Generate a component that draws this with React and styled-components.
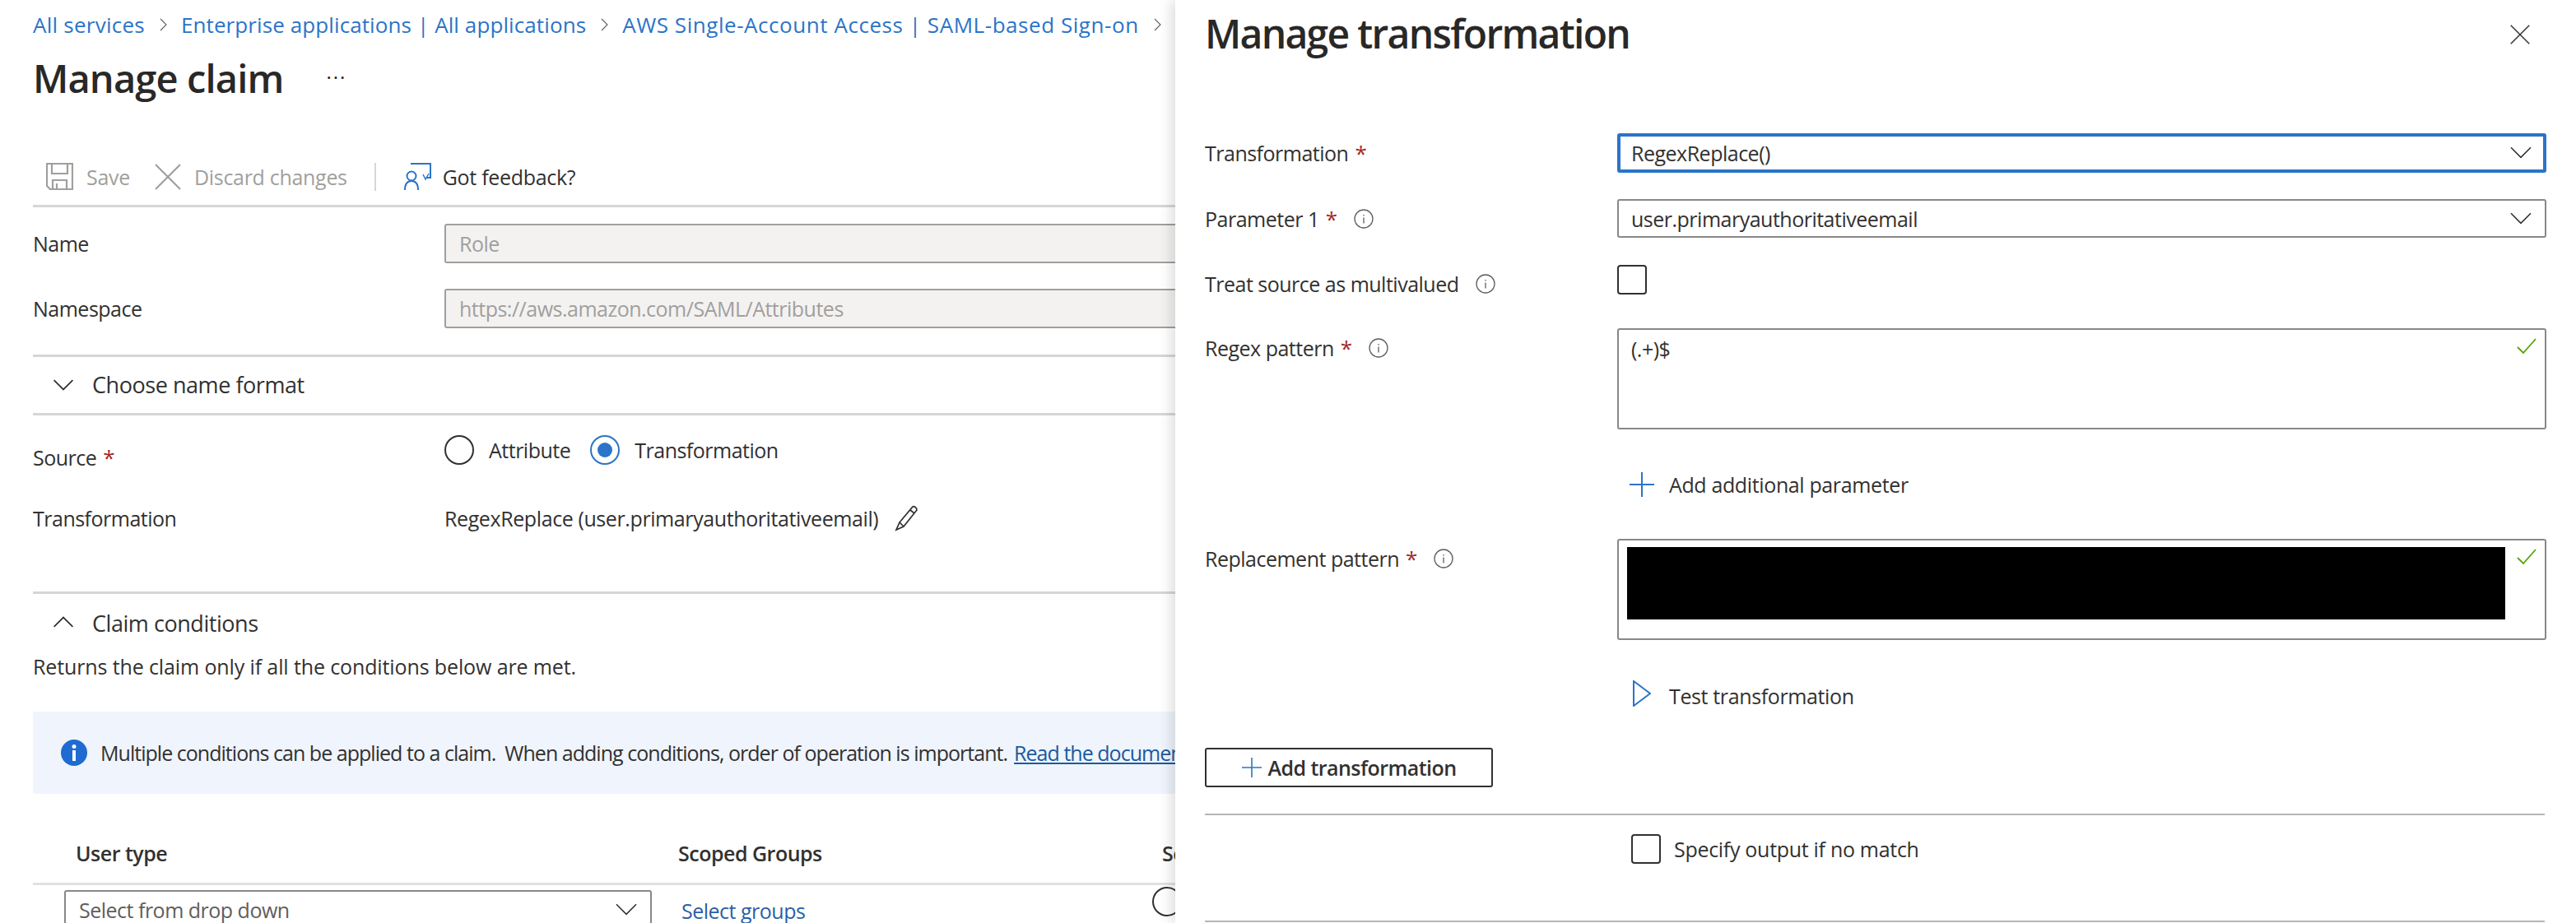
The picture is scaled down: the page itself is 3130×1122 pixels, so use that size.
import React from "react";
import styled, { createGlobalStyle } from "styled-components";

const Global = createGlobalStyle`
  html, body { margin: 0; padding: 0; background: #fff; }
  body { font-family: "Open Sans", "Liberation Sans", sans-serif; color: #323130; }
  * { box-sizing: border-box; }
  svg { flex: none; }
`;
const Page = styled.div`
  width: 3130px; height: 1122px; overflow: hidden; display: flex; font-size: 25px; letter-spacing: -0.5px;
`;
const Main = styled.main`
  width: 1428px; flex: none; height: 1122px; overflow: hidden; padding-left: 40px; white-space: nowrap;
`;
const Crumbs = styled.nav`
  height: 60px; display: flex; align-items: center; gap: 14px; color: #2b74c8; font-size: 26px;
`;
const Crumb = styled.a`
  letter-spacing: ${p => p.$ls}px;
`;
const Title = styled.h1`
  margin: 4px 0 0; height: 62px; display: flex; align-items: center; gap: 52px; font-size: 47px; font-weight: 600; letter-spacing: -0.85px; color: #292827;
`;
const Dots = styled.span`
  font-size: 24px; font-weight: 400; letter-spacing: 2px; position: relative; top: -2px;
`;
const Toolbar = styled.div`
  margin: 64px 0 4px; height: 62px; display: flex; align-items: center; padding-left: 16px; padding-bottom: 10px; border-bottom: 3px solid #d6d6d6; letter-spacing: -0.3px;
`;
const ToolItem = styled.span`
  display: flex; align-items: center; gap: ${p => p.$gap || 16}px; margin-left: ${p => p.$ml || 0}px; color: ${p => p.$off ? "#a19f9d" : "#323130"};
`;
const ToolSep = styled.span`
  width: 2px; height: 34px; background: #d6d6d6; margin: 0 33px;
`;
const Row = styled.div`
  display: flex; align-items: center; height: ${p => p.$h}px; margin-top: ${p => p.$mt || 0}px; letter-spacing: ${p => p.$ls ?? -0.5}px;
`;
const Label = styled.span`
  width: 500px; flex: none; letter-spacing: -0.5px;
`;
const Disabled = styled.div`
  flex: 1; height: 48px; margin-right: -40px; background: #f3f2f1; border: 2px solid #a19f9d; border-radius: 3px; color: #a19f9d; padding-left: 16px; display: flex; align-items: center;
`;
const Section = styled.div`
  display: flex; align-items: center; gap: 22px; padding-left: 24px; padding-bottom: 2px; height: ${p => p.$h || 74}px; margin-top: ${p => p.$mt || 0}px; margin-right: -40px;
  ${p => p.$top && "border-top: 3px solid #d6d6d6;"}
  ${p => p.$bottom && "border-bottom: 3px solid #d6d6d6;"}
  font-size: 27px; letter-spacing: -0.45px;
`;
const RadioDot = styled.span`
  width: 36px; height: 36px; border-radius: 50%; flex: none; border: 2px solid ${p => p.$on ? "#2b74c8" : "#323130"}; display: flex; align-items: center; justify-content: center;
  &::after { content: ""; width: 18px; height: 18px; border-radius: 50%; background: ${p => p.$on ? "#2b74c8" : "transparent"}; }
`;
const RadioGroup = styled.div`
  display: flex; align-items: center; margin-top: -18px;
`;
const RadioText = styled.span`
  margin-left: 18px; margin-right: 24px;
`;
const Req = styled.span`
  color: #a4262c; margin-left: 8px; font-size: 26px;
`;
const Info = styled.div`
  height: 100px; margin-top: 36px; margin-right: -40px; background: #eff4fd; display: flex; align-items: center; padding-left: 34px; gap: 16px; overflow: hidden; border-radius: 3px; letter-spacing: -0.97px;
`;
const InfoLink = styled.a`
  color: #1a5a9e; text-decoration: underline; margin-left: -8px;
`;
const TableHead = styled.div`
  display: flex; align-items: center; height: 111px; padding-top: 36px; margin-right: -40px; border-bottom: 3px solid #e1e1e1; font-weight: 600; padding-left: 52px;
`;
const Col = styled.span`
  width: ${p => p.$w}px; flex: none;
`;
const TableRow = styled.div`
  display: flex; margin-top: 6px; padding-left: 38px; margin-right: -40px; align-items: flex-start;
`;
const Drop = styled.div`
  width: 714px; height: 48px; border: 2px solid #8a8886; border-radius: 3px; padding: 0 16px; display: flex; align-items: center; justify-content: space-between; color: #605e5c;
`;
const GroupLink = styled.a`
  color: #2b5fa8; margin-left: 36px; margin-top: 8px; width: 572px;
`;
const CutRadio = styled.span`
  width: 36px; height: 36px; border-radius: 50%; border: 2px solid #323130; display: block; flex: none; margin-top: -4px;
`;
const Panel = styled.aside`
  flex: 1; height: 1122px; position: relative; background: #fff; padding-left: 36px; box-shadow: -6px 0 14px rgba(0,0,0,.12); white-space: nowrap;
`;
const PanelTitle = styled.h2`
  margin: 0; height: 80px; display: flex; align-items: center; font-size: 48px; font-weight: 600; letter-spacing: -1.7px; color: #292827;
`;
const CloseBtn = styled.button`
  position: absolute; right: 56px; top: 30px; width: 24px; height: 24px; padding: 0; border: 0; background: none; display: flex;
`;
const FormRow = styled.div`
  display: flex; align-items: ${p => p.$align || "center"}; margin-top: ${p => p.$mt || 0}px;
`;
const FormLabel = styled.span`
  width: 501px; flex: none; display: flex; align-items: center; padding-top: ${p => p.$pt || 0}px;
`;
const InfoGlyph = styled.span`
  margin-left: 20px; display: flex;
`;
const Select = styled.div`
  width: 1129px; height: ${p => p.$focus ? 48 : 47}px; border-radius: 3px; border: ${p => p.$focus ? "4px solid #2b74c8" : "2px solid #8a8886"};
  padding: 0 ${p => p.$focus ? 14 : 16}px 0 ${p => p.$focus ? 13 : 15}px; display: flex; align-items: center; justify-content: space-between;
`;
const Check = styled.span`
  width: 36px; height: 36px; border: 2px solid #323130; border-radius: 4px; flex: none; display: block;
`;
const TextArea = styled.div`
  width: 1129px; height: 123px; border: 2px solid #8a8886; border-radius: 3px; position: relative; padding: 6px 15px;
`;
const Valid = styled.span`
  position: absolute; right: 10px; top: 10px; display: flex;
`;
const Redacted = styled.div`
  position: absolute; left: 10px; top: 8px; width: 1067px; height: 88px; background: #000;
`;
const ActionRow = styled.div`
  display: flex; align-items: center; margin-left: 516px; height: 40px; margin-top: ${p => p.$mt}px; gap: ${p => p.$gap}px; letter-spacing: -0.37px;
`;
const AddButton = styled.button`
  width: 350px; height: 48px; margin-top: 43px; background: #fff; border: 2px solid #323130; border-radius: 3px; display: flex; align-items: center; justify-content: center; gap: 8px;
  font: inherit; font-weight: 600; letter-spacing: -0.55px; color: #323130; padding: 0;
`;
const Rule = styled.hr`
  border: 0; height: 2px; background: #b5b5b5; margin: ${p => p.$mt}px 0 0; width: 1628px;
`;
const NoMatch = styled.div`
  display: flex; align-items: center; gap: 16px; margin: 23px 0 0 518px; height: 36px; letter-spacing: -0.3px;
`;

const Chevron = ({ dir = "right", size = 16, color = "#605e5c" }) => {
  const d = { right: "M5 1l7 7-7 7", down: "M1 5l7 7 7-7", up: "M1 11l7-7 7 7" }[dir];
  return <svg width={size} height={size} viewBox="0 0 16 16" fill="none" stroke={color} strokeWidth="1.1"><path d={d} /></svg>;
};
const Down = ({ w = 26 }) => <svg width={w} height={w * 0.6} viewBox="0 0 26 15" fill="none" stroke="#323130" strokeWidth="1.6"><path d="M1 1l12 12L25 1" /></svg>;
const Save = () => <svg width="33" height="33" viewBox="0 0 33 33" fill="none" stroke="#a19f9d" strokeWidth="2.2"><path d="M1 1h31v31H5l-4-4zM7 1v12h19V1M8 32V21h17v11M13 25v7" /></svg>;
const XIcon = ({ s = 32, c = "#a19f9d", w = 2.2 }) => <svg width={s} height={s} viewBox="0 0 32 32" fill="none" stroke={c} strokeWidth={w}><path d="M1 1l30 30M31 1L1 31" /></svg>;
const Feedback = () => <svg width="34" height="34" viewBox="0 0 34 34" fill="none" stroke="#2b74c8" strokeWidth="2"><path d="M9 1h24v17h-5M2 33c0-7 3-11 8-11s8 4 8 11" /><circle cx="10" cy="16" r="5.500" /><path d="M24 14l3 6 4-7" strokeWidth="1.500" /></svg>;
const Pencil = () => <svg width="32" height="32" viewBox="0 0 32 32" fill="none" stroke="#323130" strokeWidth="1.700"><path d="M8 21L24 2c1.500-1 5 1 5 4L13 26l-9 4zM21 6l5 4M8 21l5 5" /></svg>;
const InfoSolid = () => <svg width="32" height="32" viewBox="0 0 32 32"><circle cx="16" cy="16" r="16" fill="#1f6bd1" /><rect x="14" y="13" width="4" height="13" fill="#fff" /><circle cx="16" cy="8.500" r="2.500" fill="#fff" /></svg>;
const InfoLine = () => <svg width="24" height="24" viewBox="0 0 24 24" fill="none" stroke="#605e5c" strokeWidth="1.300"><circle cx="12" cy="12" r="11" /><path d="M12 10.500v7M12 7v1.500" /></svg>;
const Plus = ({ s = 30 }) => <svg width={s} height={s} viewBox="0 0 30 30" fill="none" stroke="#2b74c8" strokeWidth="2"><path d="M15 0v30M0 15h30" /></svg>;
const Play = () => <svg width="22" height="32" viewBox="0 0 22 32" fill="none" stroke="#2b74c8" strokeWidth="2"><path d="M1 1v30L21 16z" /></svg>;
const Tick = () => <svg width="24" height="20" viewBox="0 0 24 20" fill="none" stroke="#57a300" strokeWidth="1.800"><path d="M1 11l7 7L23 1" /></svg>;

export default function App() {
  return (
    <Page>
      <Global />
      <Main>
        <Crumbs>
          <Crumb $ls={0.25}>All services</Crumb><Chevron />
          <Crumb $ls={0.1}>Enterprise applications | All applications</Crumb><Chevron />
          <Crumb $ls={0.55}>AWS Single-Account Access | SAML-based Sign-on</Crumb><Chevron />
        </Crumbs>
        <Title>Manage claim <Dots>···</Dots></Title>
        <Toolbar>
          <ToolItem $off><Save />Save</ToolItem>
          <ToolItem $off $ml={30}><XIcon />Discard changes</ToolItem>
          <ToolSep />
          <ToolItem $gap={14}><Feedback />Got feedback?</ToolItem>
        </Toolbar>
        <Row $h={79}><Label>Name</Label><Disabled>Role</Disabled></Row>
        <Row $h={79}><Label>Namespace</Label><Disabled>https://aws.amazon.com/SAML/Attributes</Disabled></Row>
        <Section $top $bottom $h={74} $mt={17}><Chevron dir="down" size={26} color="#323130" />Choose name format</Section>
        <Row $h={102}>
          <Label>Source<Req>*</Req></Label>
          <RadioGroup>
            <RadioDot /><RadioText>Attribute</RadioText>
            <RadioDot $on /><RadioText>Transformation</RadioText>
          </RadioGroup>
        </Row>
        <Row $h={50} $ls={-0.4} $mt={-2}>
          <Label>Transformation</Label>
          <span>RegexReplace (user.primaryauthoritativeemail)</span>
          <span style={{ width: 18 }} /><Pencil />
        </Row>
        <Section $top $h={75} $mt={64}><Chevron dir="up" size={26} color="#323130" />Claim conditions</Section>
        <Row $h={38} $mt={-3} $ls={-0.12}>Returns the claim only if all the conditions below are met.</Row>
        <Info><InfoSolid /><span>Multiple conditions can be applied to a claim.&nbsp; When adding conditions, order of operation is important.</span> <InfoLink>Read the documentation</InfoLink></Info>
        <TableHead><Col $w={732}>User type</Col><Col $w={588}>Scoped Groups</Col><span>Source</span></TableHead>
        <TableRow>
          <Drop>Select from drop down<Down /></Drop>
          <GroupLink>Select groups</GroupLink>
          <CutRadio />
        </TableRow>
      </Main>
      <Panel>
        <PanelTitle>Manage transformation</PanelTitle>
        <CloseBtn aria-label="Close"><XIcon s={24} c="#323130" w={2} /></CloseBtn>
        <FormRow $mt={82}>
          <FormLabel>Transformation<Req>*</Req></FormLabel>
          <Select $focus>RegexReplace()<Down /></Select>
        </FormRow>
        <FormRow $mt={32}>
          <FormLabel>Parameter 1<Req>*</Req><InfoGlyph><InfoLine /></InfoGlyph></FormLabel>
          <Select>user.primaryauthoritativeemail<Down /></Select>
        </FormRow>
        <FormRow $mt={33} $align="flex-start">
          <FormLabel $pt={6}>Treat source as multivalued<InfoGlyph><InfoLine /></InfoGlyph></FormLabel>
          <Check />
        </FormRow>
        <FormRow $mt={37} $align="flex-start">
          <FormLabel $pt={6}>Regex pattern<Req>*</Req><InfoGlyph><InfoLine /></InfoGlyph></FormLabel>
          <TextArea>(.+)$<Valid><Tick /></Valid></TextArea>
        </FormRow>
        <ActionRow $mt={47} $gap={18}><Plus />Add additional parameter</ActionRow>
        <FormRow $mt={46} $align="flex-start">
          <FormLabel $pt={6}>Replacement pattern<Req>*</Req><InfoGlyph><InfoLine /></InfoGlyph></FormLabel>
          <TextArea><Redacted /><Valid><Tick /></Valid></TextArea>
        </FormRow>
        <ActionRow $mt={48} $gap={22}><span style={{ marginLeft: 4 }}><Play /></span>Test transformation</ActionRow>
        <AddButton><Plus s={24} />Add transformation</AddButton>
        <Rule $mt={32} />
        <NoMatch><Check />Specify output if no match</NoMatch>
        <Rule $mt={69} />
      </Panel>
    </Page>
  );
}
